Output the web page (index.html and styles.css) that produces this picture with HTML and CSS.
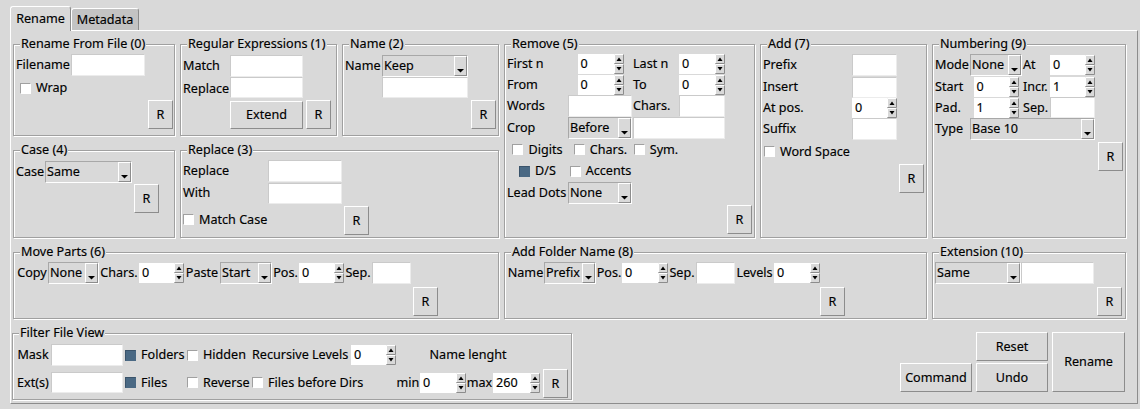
FILE: index.html
```html
<!DOCTYPE html>
<html>
<head>
<meta charset="utf-8">
<title>Rename</title>
<link rel="stylesheet" href="styles.css">
</head>
<body>
<svg class="defs" aria-hidden="true">
  <defs>
    <symbol id="spin" viewBox="0 0 10 20">
      <rect width="10" height="20" fill="#d9d9d9"/>
      <path d="M0.5 9V0.5H9.5" stroke="#fff" fill="none"/>
      <path d="M0.5 9.5H9.5V0.5" stroke="#8c8c8c" fill="none"/>
      <path d="M0.5 19V10.5H9.5" stroke="#fff" fill="none"/>
      <path d="M0.5 19.5H9.5V10.5" stroke="#8c8c8c" fill="none"/>
      <path d="M2.5 7L5 3.5L7.5 7Z" fill="#000"/>
      <path d="M2.5 13L5 16.5L7.5 13Z" fill="#000"/>
    </symbol>
    <symbol id="drop" viewBox="0 0 11 18">
      <path d="M2 12H9L5.5 15.5Z" fill="#000"/>
    </symbol>
  </defs>
</svg>
<div class="app">
  <div class="tabs">
    <div class="tab tab-active">Rename</div>
    <div class="tab">Metadata</div>
  </div>
  <div class="pane">
    <div class="grid">
      <fieldset class="fs f-rff"><legend>Rename From File (0)</legend>
        <div class="g g-rff">
          <span class="lbl c1">Filename</span><span class="e"></span>
          <label class="chk c1 s2 pl4"><span class="box"></span>Wrap</label>
          <div class="btn r rlast">R</div>
        </div>
      </fieldset>

      <fieldset class="fs f-re"><legend>Regular Expressions (1)</legend>
        <div class="g g-re">
          <span class="lbl c1">Match</span><span class="e"></span>
          <span class="lbl c1">Replace</span><span class="e h21 top"></span>
          <div class="btn c2 ext">Extend</div>
          <div class="btn r rlast">R</div>
        </div>
      </fieldset>

      <fieldset class="fs f-name"><legend>Name (2)</legend>
        <div class="g g-name">
          <span class="lbl c1">Name</span>
          <span class="cb"><span class="v">Keep</span><span class="dd"><svg><use href="#drop"/></svg></span></span>
          <span class="e h21 top c2"></span>
          <div class="btn r rlast">R</div>
        </div>
      </fieldset>

      <fieldset class="fs f-remove"><legend>Remove (5)</legend>
        <div class="g g-remove">
          <span class="lbl c1">First n</span>
          <span class="sp w46 ctr"><span class="v">0</span><svg class="ar"><use href="#spin"/></svg></span>
          <span class="lbl">Last n</span>
          <span class="sp"><span class="v">0</span><svg class="ar"><use href="#spin"/></svg></span>

          <span class="lbl c1">From</span>
          <span class="sp w46 ctr"><span class="v">0</span><svg class="ar"><use href="#spin"/></svg></span>
          <span class="lbl">To</span>
          <span class="sp"><span class="v">0</span><svg class="ar"><use href="#spin"/></svg></span>

          <span class="lbl c1">Words</span>
          <span class="e w64"></span>
          <span class="lbl">Chars.</span>
          <span class="e"></span>

          <span class="lbl c1">Crop</span>
          <span class="cb w64"><span class="v">Before</span><span class="dd"><svg><use href="#drop"/></svg></span></span>
          <span class="e s2"></span>

          <label class="chk c1 ctr"><span class="box"></span>Digits</label>
          <label class="chk ctr"><span class="box"></span>Chars.</label>
          <label class="chk ctr"><span class="box"></span>Sym.</label>

          <label class="chk c1 ctr"><span class="box on"></span>D/S</label>
          <label class="chk ctr"><span class="box"></span>Accents</label>

          <span class="lbl c1">Lead Dots</span>
          <span class="cb w64"><span class="v">None</span><span class="dd"><svg><use href="#drop"/></svg></span></span>

          <div class="btn r rlast">R</div>
        </div>
      </fieldset>

      <fieldset class="fs f-add"><legend>Add (7)</legend>
        <div class="g g-add">
          <span class="lbl c1">Prefix</span><span class="e"></span>
          <span class="lbl c1">Insert</span><span class="e h21 bot"></span>
          <span class="lbl c1">At pos.</span>
          <span class="sp"><span class="v">0</span><svg class="ar"><use href="#spin"/></svg></span>
          <span class="lbl c1">Suffix</span><span class="e"></span>
          <label class="chk c1 s3 pl1"><span class="box"></span>Word Space</label>
          <div class="btn r rlast">R</div>
        </div>
      </fieldset>

      <fieldset class="fs f-num"><legend>Numbering (9)</legend>
        <div class="g g-num">
          <span class="lbl c1">Mode</span>
          <span class="cb"><span class="v">None</span><span class="dd"><svg><use href="#drop"/></svg></span></span>
          <span class="lbl pl1">At</span>
          <span class="sp"><span class="v">0</span><svg class="ar"><use href="#spin"/></svg></span>

          <span class="lbl c1">Start</span>
          <span class="sp w45 ctr"><span class="v">0</span><svg class="ar"><use href="#spin"/></svg></span>
          <span class="lbl pl1">Incr.</span>
          <span class="sp"><span class="v">1</span><svg class="ar"><use href="#spin"/></svg></span>

          <span class="lbl c1">Pad.</span>
          <span class="sp w45 ctr"><span class="v">1</span><svg class="ar"><use href="#spin"/></svg></span>
          <span class="lbl pl1">Sep.</span>
          <span class="e h21"></span>

          <span class="lbl c1">Type</span>
          <span class="cb s3"><span class="v">Base 10</span><span class="dd"><svg><use href="#drop"/></svg></span></span>

          <div class="btn r rlast">R</div>
        </div>
      </fieldset>

      <fieldset class="fs f-case"><legend>Case (4)</legend>
        <div class="g g-case">
          <span class="lbl c1">Case</span>
          <span class="cb"><span class="v">Same</span><span class="dd"><svg><use href="#drop"/></svg></span></span>
          <div class="btn r rlast">R</div>
        </div>
      </fieldset>

      <fieldset class="fs f-replace"><legend>Replace (3)</legend>
        <div class="g g-replace">
          <span class="lbl c1">Replace</span><span class="e"></span>
          <span class="lbl c1">With</span><span class="e h21"></span>
          <label class="chk c1 s2"><span class="box"></span>Match Case</label>
          <div class="btn r rlast">R</div>
        </div>
      </fieldset>

      <fieldset class="fs f-move"><legend>Move Parts (6)</legend>
        <div class="g g-move">
          <span class="lbl c1 ctr">Copy</span>
          <span class="cb"><span class="v">None</span><span class="dd"><svg><use href="#drop"/></svg></span></span>
          <span class="lbl ctr">Chars.</span>
          <span class="sp"><span class="v">0</span><svg class="ar"><use href="#spin"/></svg></span>
          <span class="lbl ctr">Paste</span>
          <span class="cb"><span class="v">Start</span><span class="dd"><svg><use href="#drop"/></svg></span></span>
          <span class="lbl ctr">Pos.</span>
          <span class="sp"><span class="v">0</span><svg class="ar"><use href="#spin"/></svg></span>
          <span class="lbl ctr">Sep.</span>
          <span class="e"></span>
          <div class="btn r rlast">R</div>
        </div>
      </fieldset>

      <fieldset class="fs f-folder"><legend>Add Folder Name (8)</legend>
        <div class="g g-folder">
          <span class="lbl c1 ctr">Name</span>
          <span class="cb"><span class="v">Prefix</span><span class="dd"><svg><use href="#drop"/></svg></span></span>
          <span class="lbl ctr">Pos.</span>
          <span class="sp"><span class="v">0</span><svg class="ar"><use href="#spin"/></svg></span>
          <span class="lbl ctr">Sep.</span>
          <span class="e"></span>
          <span class="lbl ctr">Levels</span>
          <span class="sp"><span class="v">0</span><svg class="ar"><use href="#spin"/></svg></span>
          <div class="btn r rlast">R</div>
        </div>
      </fieldset>

      <fieldset class="fs f-ext"><legend>Extension (10)</legend>
        <div class="g g-ext">
          <span class="cb c1"><span class="v">Same</span><span class="dd"><svg><use href="#drop"/></svg></span></span>
          <span class="e"></span>
          <div class="btn r rlast">R</div>
        </div>
      </fieldset>
    </div>

    <div class="bottom">
      <fieldset class="fs f-filter"><legend>Filter File View</legend>
        <div class="g g-filter">
          <span class="lbl c1 ctr">Mask</span>
          <span class="e"></span>
          <label class="chk pl2"><span class="box on"></span>Folders</label>
          <label class="chk pl1"><span class="box"></span>Hidden</label>
          <span class="lbl pl1">Recursive Levels</span>
          <span class="sp"><span class="v">0</span><svg class="ar"><use href="#spin"/></svg></span>
          <span class="lbl s4 ctr">Name lenght</span>

          <span class="lbl c1 ctr">Ext(s)</span>
          <span class="e h21"></span>
          <label class="chk pl2"><span class="box on"></span>Files</label>
          <label class="chk pl1"><span class="box"></span>Reverse</label>
          <label class="chk s2 pl1"><span class="box"></span>Files before Dirs</label>
          <span class="lbl ctr">min</span>
          <span class="sp"><span class="v">0</span><svg class="ar"><use href="#spin"/></svg></span>
          <span class="lbl ctr">max</span>
          <span class="sp"><span class="v">260</span><svg class="ar"><use href="#spin"/></svg></span>
          <div class="btn r rlast">R</div>
        </div>
      </fieldset>

      <div class="actions">
        <div class="btn a-reset">Reset</div>
        <div class="btn a-rename">Rename</div>
        <div class="btn a-command">Command</div>
        <div class="btn a-undo">Undo</div>
      </div>
    </div>
  </div>
</div>
</body>
</html>
```
FILE: styles.css
```css
* { box-sizing: border-box; }
html, body { margin: 0; padding: 0; }
body {
  width: 1140px;
  height: 409px;
  overflow: hidden;
  background: #d9d9d9;
  font-family: "Noto Sans", "Open Sans", sans-serif;
  font-size: 12.6px;
  line-height: 16px;
  color: #000;
  -webkit-text-stroke: 0.15px #000;
}
.defs { position: absolute; width: 0; height: 0; overflow: hidden; }

.app { padding: 6px 0 0 10px; }

/* tabs */
.tabs { display: flex; align-items: flex-end; height: 24px; }
.tab {
  position: relative;
  width: 68px;
  height: 22px;
  border: 1px solid;
  border-bottom: none;
  border-color: #fff #8c8c8c #8c8c8c #fff;
  border-radius: 3px 3px 0 0;
  background: #c3c3c3;
  text-align: center;
  line-height: 21px;
}
.tab-active {
  z-index: 1;
  width: 61px;
  height: 25px;
  margin-bottom: -1px;
  background: #d9d9d9;
  line-height: 23px;
}

.pane {
  width: 1128px;
  height: 374px;
  border: 1px solid;
  border-color: #fff #8c8c8c #8c8c8c #fff;
  padding: 5px 10px 2px 2px;
}

.grid {
  display: grid;
  grid-template-columns: 162px 157px 157px 251px 167px 194px;
  grid-template-rows: 100px 96px 75px;
  gap: 6px 5px;
}
.f-rff { grid-column: 1; grid-row: 1; }
.f-re { grid-column: 2; grid-row: 1; }
.f-name { grid-column: 3; grid-row: 1; }
.f-remove { grid-column: 4; grid-row: 1 / 3; }
.f-add { grid-column: 5; grid-row: 1 / 3; }
.f-num { grid-column: 6; grid-row: 1 / 3; }
.f-case { grid-column: 1; grid-row: 2; }
.f-replace { grid-column: 2 / 4; grid-row: 2; }
.f-move { grid-column: 1 / 4; grid-row: 3; }
.f-folder { grid-column: 4 / 6; grid-row: 3; }
.f-ext { grid-column: 6; grid-row: 3; }

/* label frames */
.fs {
  margin: 0;
  min-width: 0;
  padding: 2px 2px 0 2px;
  border: 1px solid #a0a0a0;
  box-shadow: inset 1px 1px 0 #fff, 1px 1px 0 #fff;
}
.fs > legend {
  margin-left: 4px;
  padding: 0 1px;
  line-height: 16px;
  background: #d9d9d9;
}

/* inner grids */
.g { display: grid; align-items: center; }
.c1 { grid-column-start: 1; }
.c2 { grid-column-start: 2; }
.s2 { grid-column-end: span 2; }
.s3 { grid-column-end: span 3; }
.s4 { grid-column-end: span 4; }
.ctr { justify-self: center; }
.top { align-self: start; }
.bot { align-self: end; }
.pl1 { padding-left: 1px; }
.pl2 { padding-left: 2px; }
.pl4 { padding-left: 4px; }
.rlast { grid-row: -2; grid-column: -2; align-self: end; justify-self: end; }

.g-rff { grid-template-columns: 55px 74px 3px 25px; grid-template-rows: 22px 24px 29px; }
.g-re { grid-template-columns: 47px 73px 3px 25px; grid-template-rows: 23px 23px 29px; }
.g-name { grid-template-columns: 37px 86px 3px 25px; grid-template-rows: 23px 23px 29px; }
.g-remove { grid-template-columns: 61px 65px 46px 46px 27px; grid-template-rows: 20px 21px 22px 22px 21px 22px 22px 30px; }
.g-add { grid-template-columns: 89px 45px 2px 25px; grid-template-rows: 22px 22px 20px 22px 23px 30px; }
.g-num { grid-template-columns: 35px 52px 28px 45px 3px 25px; grid-template-rows: 22px 21px 21px 22px 31px; }
.g-case { grid-template-columns: 29px 87px 2px 25px; grid-template-rows: 23px 30px; }
.g-replace { grid-template-columns: 85px 74px 2px 25px; grid-template-rows: 22px 22px 31px; }
.g-move { grid-template-columns: 32px 51px 40px 45px 36px 52px 27px 45px 28px 39px 27px; grid-template-rows: 22px 32px; }
.g-folder { grid-template-columns: 37px 52px 26px 46px 28px 39px 39px 46px 25px; grid-template-rows: 22px 32px; }
.g-ext { grid-template-columns: 86px 73px 3px 25px; grid-template-rows: 22px 32px; }
.g-filter { grid-template-columns: 36px 72px 63px 65px 100px 45px 24px 46px 27px 47px 3px 25px; grid-template-rows: 24px 31px; }

/* widgets */
.lbl { white-space: nowrap; }
.e {
  display: block;
  height: 22px;
  background: #fff;
  border: 1px solid;
  border-color: #cacaca #ececec #ececec #cacaca;
}
.h21 { height: 21px; }
.w45 { width: 45px; }
.w46 { width: 46px; }
.w64 { width: 64px; }

.sp { display: flex; height: 20px; background: #fff; }
.sp .v { flex: 1; padding-left: 3px; line-height: 20px; }
.ar { display: block; flex: none; width: 10px; height: 20px; }

.cb {
  display: flex;
  height: 22px;
  background: #d9d9d9;
  border: 1px solid;
  border-color: #a8a8a8 #fff #fff #a8a8a8;
}
.cb .v { flex: 1; padding-left: 1px; line-height: 20px; white-space: nowrap; overflow: hidden; }
.cb .dd {
  flex: none;
  width: 13px;
  border: 1px solid;
  border-color: #fff #8c8c8c #8c8c8c #fff;
}
.dd svg { display: block; width: 11px; height: 18px; }

.btn {
  display: flex;
  align-items: center;
  justify-content: center;
  background: #d9d9d9;
  border: 1px solid;
  border-color: #fff #8c8c8c #8c8c8c #fff;
  white-space: nowrap;
}
.r { width: 25px; height: 29px; }
.ext { height: 28px; }

.chk { display: flex; align-items: center; gap: 5px; white-space: nowrap; }
.box {
  flex: none;
  width: 11px;
  height: 11px;
  background: #fff;
  border: 1px solid;
  border-color: #a0a0a0 #fff #fff #a0a0a0;
}
.box.on { background: #4a6984; border-color: #3a536a #4a6984 #4a6984 #3a536a; }

/* bottom row */
.bottom {
  display: flex;
  justify-content: space-between;
  align-items: flex-start;
  margin: 6px 2px 0 -1px;
}
.f-filter { width: 560px; height: 75px; }
.actions {
  display: grid;
  grid-template-columns: 72px 72px 73px;
  grid-template-rows: 29px 29px;
  gap: 2px 4px;
  margin-top: 7px;
}
.a-reset { grid-column: 2; grid-row: 1; }
.a-rename { grid-column: 3; grid-row: 1 / 3; }
.a-command { grid-column: 1; grid-row: 2; }
.a-undo { grid-column: 2; grid-row: 2; }
```
